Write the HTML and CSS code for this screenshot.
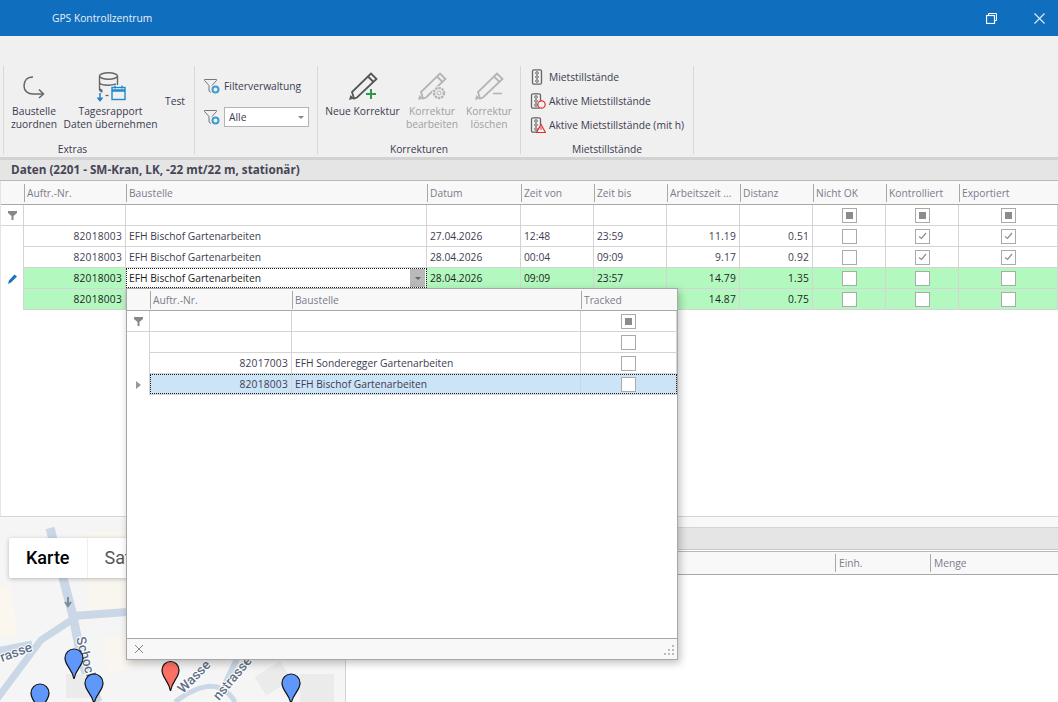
FILE: index.html
```html
<!DOCTYPE html>
<html lang="de">
<head>
  <meta charset="UTF-8">
  <title>GPS Kontrollzentrum</title>
  <link rel="stylesheet" href="styles.css">
</head>
<body>
  <header class="titlebar">
    <span class="app-title">GPS Kontrollzentrum</span>
    <div class="win-buttons">
      <svg width="11" height="11" viewBox="0 0 11 11" fill="none" stroke="#fff"><path d="M2.500 2V.5h8v7H9"/><rect x=".5" y="2.500" width="8" height="8" stroke-width="1.200"/></svg>
      <svg width="11" height="11" viewBox="0 0 11 11" fill="none" stroke="#e4eef8" stroke-width="1.100"><path d="M.5.5l10 10M10.500.5l-10 10"/></svg>
    </div>
  </header>

  <section class="ribbon">
    <div class="rib-group group-extras">
      <div class="rib-items">
        <div class="big-btn btn-zuordnen">
          <svg class="icon-zuordnen" width="24" height="24" viewBox="0 0 24 24" fill="none" stroke="#666" stroke-width="1.500"><path d="M11 2C5 2 2 6 2 11c0 5 4 8 9 8h10"/><path d="M17 14.500l4.500 4.500-4.500 4"/></svg>
          <span>Baustelle<br>zuordnen</span>
        </div>
        <div class="big-btn btn-tages">
          <svg class="icon-big" width="32" height="30" viewBox="0 0 32 30" fill="none"><g stroke="#666" stroke-width="1.400"><ellipse cx="13.500" cy="4" rx="9" ry="3.200"/><path d="M4.500 4v13c0 1.500 1 2.500 3 3M22.500 4v9M4.500 10c0 2 4 3.200 9 3.200 3 0 5-.4 7.500-1.400M4.500 16c0 1 1 2 3 2.500"/></g><path d="M5 21v7M2.500 25.500L5 28.500l2.500-3" stroke="#1c7cc4" stroke-width="1.500"/><path d="M10.500 23.500h3" stroke="#666" stroke-width="1.300"/><rect x="17" y="15.500" width="13" height="12" fill="#f0f0f0" stroke="#1c8ad0" stroke-width="1.400"/><path d="M17 18.500h13" stroke="#1c8ad0" stroke-width="2.500"/><path d="M20 13.500v3M27 13.500v3" stroke="#1c8ad0" stroke-width="1.300"/></svg>
          <span>Tagesrapport<br>Daten übernehmen</span>
        </div>
        <div class="test-btn">Test</div>
      </div>
      <div class="rib-label">Extras</div>
    </div>

    <div class="rib-group group-filter">
      <div class="filter-line">
        <svg width="16" height="16" viewBox="0 0 16 16" fill="none"><path d="M8 7.500l4.500-5v-1H.5v1L5 7.500V13l2 1.500" stroke="#777"/><circle cx="11.500" cy="11.500" r="3" fill="#f0f0f0" stroke="#3d9ad8" stroke-width="2"/></svg>
        <span>Filterverwaltung</span>
      </div>
      <div class="filter-line">
        <svg width="16" height="16" viewBox="0 0 16 16" fill="none"><path d="M8 7.500l4.500-5v-1H.5v1L5 7.500V13l2 1.500" stroke="#777"/><circle cx="11.500" cy="11.500" r="3" fill="#f0f0f0" stroke="#3d9ad8" stroke-width="2"/></svg>
        <div class="combo">Alle<i class="combo-arrow"></i></div>
      </div>
    </div>

    <div class="rib-group group-korr">
      <div class="rib-items">
        <div class="big-btn btn-neue">
          <svg class="icon-big" width="30" height="30" viewBox="0 0 30 30" fill="none"><path d="M6 26.500L4 20 23 1.500 28.500 7 9 25.500zM20 4.500l5.500 5.500" stroke="#555" stroke-width="1.800"/><path d="M1 28l1.500-5 3.500 3.500z" fill="#555"/><path d="M23 17v10M18 22h10" stroke="#2e9a46" stroke-width="2"/></svg>
          <span>Neue Korrektur</span>
        </div>
        <div class="big-btn btn-disabled btn-bearb">
          <svg class="icon-big" width="30" height="30" viewBox="0 0 30 30" fill="none"><path d="M6 26.500L4 20 23 1.500 28.500 7 9 25.500zM20 4.500l5.500 5.500" stroke="#b4b4b4" stroke-width="1.800"/><path d="M1 28l1.500-5 3.500 3.500z" fill="#b4b4b4"/><circle cx="22" cy="21" r="7" fill="#f0f0f0"/><circle cx="22" cy="21" r="5" stroke="#b4b4b4" stroke-width="2.400" stroke-dasharray="2.400 .8"/><circle cx="22" cy="21" r="2" stroke="#b4b4b4"/></svg>
          <span>Korrektur<br>bearbeiten</span>
        </div>
        <div class="big-btn btn-disabled btn-losch">
          <svg class="icon-big" width="30" height="30" viewBox="0 0 30 30" fill="none"><path d="M6 26.500L4 20 23 1.500 28.500 7 9 25.500zM20 4.500l5.500 5.500" stroke="#b4b4b4" stroke-width="1.800"/><path d="M1 28l1.500-5 3.500 3.500z" fill="#b4b4b4"/><path d="M19 21.500h9" stroke="#b4b4b4" stroke-width="1.600"/></svg>
          <span>Korrektur<br>löschen</span>
        </div>
      </div>
      <div class="rib-label">Korrekturen</div>
    </div>

    <div class="rib-group group-miet">
      <div class="rib-items miet-list">
        <div class="miet-line">
          <svg width="16" height="16" viewBox="0 0 16 16" fill="none"><rect x="2.500" y=".8" width="9" height="14.400" rx="1.500" stroke="#666" stroke-width="1.300"/><g stroke="#666"><circle cx="7" cy="4" r="1.300"/><circle cx="7" cy="8" r="1.300"/><circle cx="7" cy="12" r="1.300"/></g></svg>
          <span>Mietstillstände</span>
        </div>
        <div class="miet-line">
          <svg width="16" height="16" viewBox="0 0 16 16" fill="none"><rect x="1.500" y=".8" width="9" height="14.400" rx="1.500" stroke="#666" stroke-width="1.300"/><g stroke="#666"><circle cx="6" cy="4" r="1.300"/><circle cx="6" cy="8" r="1.300"/><circle cx="6" cy="12" r="1.300"/></g><circle cx="11.500" cy="11.500" r="3.700" fill="#f0f0f0" stroke="#e03030" stroke-width="1.200"/></svg>
          <span>Aktive Mietstillstände</span>
        </div>
        <div class="miet-line">
          <svg width="16" height="16" viewBox="0 0 16 16" fill="none"><rect x="1.500" y=".8" width="9" height="14.400" rx="1.500" stroke="#666" stroke-width="1.300"/><g stroke="#666"><circle cx="6" cy="4" r="1.300"/><circle cx="6" cy="8" r="1.300"/><circle cx="6" cy="12" r="1.300"/></g><path d="M11 7.500l4.500 8h-9z" fill="#f0f0f0" stroke="#e03030" stroke-width="1.200"/><path d="M11 10v3" stroke="#e03030"/></svg>
          <span>Aktive Mietstillstände (mit h)</span>
        </div>
      </div>
      <div class="rib-label">Mietstillstände</div>
    </div>
  </section>

  <div class="caption caption-top">Daten (2201 - SM-Kran, LK, -22 mt/22 m, stationär)</div>

  <main class="data-grid">
    <div class="row head-row">
      <div class="cell"></div>
      <div class="cell">Auftr.-Nr.</div>
      <div class="cell">Baustelle</div>
      <div class="cell">Datum</div>
      <div class="cell">Zeit von</div>
      <div class="cell">Zeit bis</div>
      <div class="cell">Arbeitszeit ...</div>
      <div class="cell">Distanz</div>
      <div class="cell">Nicht OK</div>
      <div class="cell">Kontrolliert</div>
      <div class="cell">Exportiert</div>
    </div>
    <div class="row">
      <div class="cell ind filt"><svg width="9" height="9" viewBox="0 0 9 9"><path d="M0 0h9v2L5.500 5v4h-2V5L0 2z" fill="#888"/></svg></div>
      <div class="cell"></div><div class="cell"></div><div class="cell"></div><div class="cell"></div><div class="cell"></div><div class="cell"></div><div class="cell"></div>
      <div class="cell mid"><i class="box mixed"></i></div>
      <div class="cell mid"><i class="box mixed"></i></div>
      <div class="cell mid"><i class="box mixed"></i></div>
    </div>
    <div class="row">
      <div class="cell ind"></div>
      <div class="cell num">82018003</div>
      <div class="cell">EFH Bischof Gartenarbeiten</div>
      <div class="cell">27.04.2026</div>
      <div class="cell">12:48</div>
      <div class="cell">23:59</div>
      <div class="cell num">11.19</div>
      <div class="cell num">0.51</div>
      <div class="cell mid"><i class="box"></i></div>
      <div class="cell mid"><i class="box checked"><svg width="9" height="8" viewBox="0 0 9 8" fill="none"><path d="M1 4.500l2.500 2L8 1" stroke="#8c8c8c" stroke-width="1.200"/></svg></i></div>
      <div class="cell mid"><i class="box checked"><svg width="9" height="8" viewBox="0 0 9 8" fill="none"><path d="M1 4.500l2.500 2L8 1" stroke="#8c8c8c" stroke-width="1.200"/></svg></i></div>
    </div>
    <div class="row">
      <div class="cell ind"></div>
      <div class="cell num">82018003</div>
      <div class="cell">EFH Bischof Gartenarbeiten</div>
      <div class="cell">28.04.2026</div>
      <div class="cell">00:04</div>
      <div class="cell">09:09</div>
      <div class="cell num">9.17</div>
      <div class="cell num">0.92</div>
      <div class="cell mid"><i class="box"></i></div>
      <div class="cell mid"><i class="box checked"><svg width="9" height="8" viewBox="0 0 9 8" fill="none"><path d="M1 4.500l2.500 2L8 1" stroke="#8c8c8c" stroke-width="1.200"/></svg></i></div>
      <div class="cell mid"><i class="box checked"><svg width="9" height="8" viewBox="0 0 9 8" fill="none"><path d="M1 4.500l2.500 2L8 1" stroke="#8c8c8c" stroke-width="1.200"/></svg></i></div>
    </div>
    <div class="row green">
      <div class="cell ind"><svg width="9" height="10" viewBox="0 0 9 10"><path d="M0 10l1-3.500L6.500.5 9 2.500 3 8.500z" fill="#1c6fc0"/></svg></div>
      <div class="cell num">82018003</div>
      <div class="cell editing">EFH Bischof Gartenarbeiten<i class="edit-drop"></i></div>
      <div class="cell">28.04.2026</div>
      <div class="cell">09:09</div>
      <div class="cell">23:57</div>
      <div class="cell num">14.79</div>
      <div class="cell num">1.35</div>
      <div class="cell mid"><i class="box"></i></div>
      <div class="cell mid"><i class="box"></i></div>
      <div class="cell mid"><i class="box"></i></div>
    </div>
    <div class="row green">
      <div class="cell ind"></div>
      <div class="cell num">82018003</div>
      <div class="cell"></div><div class="cell"></div><div class="cell"></div><div class="cell"></div>
      <div class="cell num">14.87</div>
      <div class="cell num">0.75</div>
      <div class="cell mid"><i class="box"></i></div>
      <div class="cell mid"><i class="box"></i></div>
      <div class="cell mid"><i class="box"></i></div>
    </div>
  </main>
  <div class="grid-footer"></div>

  <section class="bottom">
    <div class="map">
      <svg width="345" height="183" viewBox="0 0 345 183">
        <rect width="345" height="183" fill="#f5f5f5"/>
        <path d="M0 68h10l8 50H0z" fill="#fbf7ee"/>
        <path d="M84 12h43v80l-40 4z" fill="#f9f6f0"/>
        <path d="M100 120l70-15 8 30-70 20z" fill="#f9f6f0"/>
        <g fill="none" stroke="#c9d7e6">
          <path d="M50 9L73 97l9 46 16 40" stroke-width="9"/>
          <path d="M73 97l54-4" stroke-width="8"/>
          <path d="M73 100l-32 21L-3 180" stroke-width="7"/>
          <path d="M32 125L-3 132" stroke-width="7"/>
          <path d="M175 183c10-8 30-20 45-14 8 4 12 8 15 14" stroke-width="5"/>
          <path d="M225 165l12-25" stroke-width="6"/>
        </g>
        <path d="M68 78v8m-3-3l3 4 3-4" stroke="#7d8a99" stroke-width="2" fill="none"/>
        <rect x="258" y="150" width="30" height="22" fill="#ebebeb" transform="rotate(-32 270 160)"/>
        <rect x="300" y="155" width="34" height="28" fill="#ebebeb"/>
        <rect x="66" y="155" width="24" height="24" fill="#ebebeb"/>
        <g class="street">
          <text transform="translate(2 143) rotate(-20)">rasse</text>
          <text transform="translate(76 119) rotate(75)">Schocher</text>
          <text transform="translate(183 175) rotate(-45)">Wasse</text>
          <text transform="translate(219 182) rotate(-50)">nstrasse</text>
        </g>
        <g stroke="#111" stroke-width="1.200">
          <path d="M74 160c-2-11-9-13-9-21a9 9 0 0 1 18 0c0 8-7 10-9 21z" fill="#5f97fb"/>
          <path d="M94 185c-2-11-9-13-9-21a9 9 0 0 1 18 0c0 8-7 10-9 21z" fill="#5f97fb"/>
          <path d="M40 195c-2-11-9-13-9-21a9 9 0 0 1 18 0c0 8-7 10-9 21z" fill="#5f97fb"/>
          <path d="M170.500 172c-2-11-8.500-13-8.500-21a8.500 8.500 0 0 1 17 0c0 8-6.500 10-8.500 21z" fill="#fb7065"/>
          <path d="M291 185c-2-11-9-13-9-21a9 9 0 0 1 18 0c0 8-7 10-9 21z" fill="#5f97fb"/>
        </g>
      </svg>
      <div class="map-tabs">
        <div class="map-tab active">Karte</div>
        <div class="map-tab">Satellit</div>
      </div>
    </div>
    <div class="detail">
      <div class="caption caption-detail"></div>
      <div class="detail-head">
        <div class="detail-spacer"></div>
        <div class="detail-col col-einh">Einh.</div>
        <div class="detail-col">Menge</div>
      </div>
    </div>
  </section>

  <div class="popup">
    <div class="row pop-row head-row">
      <div class="cell"></div>
      <div class="cell">Auftr.-Nr.</div>
      <div class="cell">Baustelle</div>
      <div class="cell">Tracked</div>
    </div>
    <div class="row pop-row">
      <div class="cell ind filt"><svg width="9" height="9" viewBox="0 0 9 9"><path d="M0 0h9v2L5.500 5v4h-2V5L0 2z" fill="#888"/></svg></div>
      <div class="cell"></div><div class="cell"></div>
      <div class="cell mid"><i class="box mixed"></i></div>
    </div>
    <div class="row pop-row">
      <div class="cell ind"></div><div class="cell"></div><div class="cell"></div>
      <div class="cell mid"><i class="box"></i></div>
    </div>
    <div class="row pop-row">
      <div class="cell ind"></div>
      <div class="cell num">82017003</div>
      <div class="cell">EFH Sonderegger Gartenarbeiten</div>
      <div class="cell mid"><i class="box"></i></div>
    </div>
    <div class="row pop-row selected">
      <div class="cell ind"><svg width="5" height="8" viewBox="0 0 5 8"><path d="M0 0l5 4-5 4z" fill="#999"/></svg></div>
      <div class="cell num">82018003</div>
      <div class="cell">EFH Bischof Gartenarbeiten</div>
      <div class="cell mid"><i class="box"></i></div>
    </div>
    <div class="pop-body"></div>
    <div class="pop-foot">
      <svg width="10" height="10" viewBox="0 0 10 10" fill="none" stroke="#888"><path d="M1 1l8 8M9 1l-8 8"/></svg>
      <svg width="11" height="11" viewBox="0 0 11 11" fill="#bbb"><path d="M9 1h2v2H9zM5 5h2v2H5zM9 5h2v2H9zM1 9h2v2H1zM5 9h2v2H5zM9 9h2v2H9z"/></svg>
    </div>
  </div>
</body>
</html>
```

FILE: styles.css
```css
/* Global */
body {
  margin: 0;
  width: 1058px;
  height: 702px;
  overflow: hidden;
  position: relative;
  display: flex;
  flex-direction: column;
  background: #fff;
  font-family: 'Open Sans', 'Liberation Sans', sans-serif;
  font-size: 10.25px;
  color: #3c3c50;
}

/* Title bar */
.titlebar {
  height: 36px;
  flex: none;
  background: #106ebe;
  display: flex;
  align-items: center;
  justify-content: space-between;
  color: #e8f1f9;
}

.app-title {
  margin-left: 52px;
}

.win-buttons {
  display: flex;
  gap: 37px;
  margin-right: 13px;
}

.win-buttons svg { display: block; }

/* Ribbon */
.ribbon {
  height: 124px;
  flex: none;
  box-sizing: border-box;
  background: #f0f0f0;
  border-bottom: 3px solid #d2d2d2;
  display: flex;
  padding: 30px 0 0 3px;
}

.rib-group {
  height: 88px;
  display: flex;
  flex-direction: column;
  border-left: 1px solid #d8d8d8;
}

.rib-items {
  display: flex;
  flex: none;
  height: 77px;
}

.rib-label {
  text-align: center;
  line-height: 13px;
  flex: none;
}

.group-extras { width: 190px; }
.group-extras .rib-label { padding-right: 53px; }
.group-filter { width: 122px; padding-top: 10px; height: 78px; }
.group-korr { width: 202px; }
.group-miet { width: 172px; border-right: 1px solid #d8d8d8; }

.big-btn {
  display: flex;
  flex-direction: column;
  align-items: center;
  text-align: center;
  line-height: 13px;
  white-space: nowrap;
}

.icon-big {
  flex: none;
  margin: 6px 0 3px;
}

.icon-zuordnen {
  flex: none;
  margin: 9px 0 6px;
}

.btn-zuordnen { width: 60px; }
.btn-tages { width: 93px; }
.btn-neue { width: 83px; margin-left: 3px; }
.btn-bearb { width: 56px; }
.btn-losch { width: 52px; margin-left: 3px; }
.btn-disabled { color: #a0a0a0; }

.test-btn {
  margin-left: 8px;
  padding-top: 28px;
}

.filter-line {
  display: flex;
  align-items: center;
  gap: 4px;
  height: 20px;
  margin: 0 0 11px 9px;
}

.combo {
  width: 85px;
  height: 20px;
  box-sizing: border-box;
  border: 1px solid #b4b4b4;
  background: #fff;
  padding-left: 4px;
  line-height: 18px;
  position: relative;
}

.combo-arrow {
  position: absolute;
  right: 4px;
  top: 8px;
  border: 3px solid transparent;
  border-top: 3px solid #888;
  border-bottom: 0;
}

.miet-list {
  flex-direction: column;
  margin-top: -1px;
  height: 78px;
  padding-left: 9px;
}

.miet-line {
  display: flex;
  align-items: center;
  gap: 3px;
  height: 24px;
  white-space: nowrap;
}

/* Captions */
.caption {
  background: #e5e5e5;
  font-weight: 700;
  flex: none;
}

.caption-top {
  height: 21px;
  line-height: 19px;
  padding-left: 11px;
  border-bottom: 1px solid #b8b8b8;
  box-sizing: border-box;
  color: #454555;
  font-size: 11.7px;
}

/* Grid */
.data-grid {
  height: 336px;
  flex: none;
  border-bottom: 1px solid #d4d4d4;
  border-left: 1px solid #e4e4e4;
  box-sizing: border-box;
}

.row {
  display: grid;
  grid-template-columns: 23px 102px 301px 94px 73px 73px 73px 73px 73px 73px 1fr;
  height: 21px;
  box-sizing: border-box;
  border-bottom: 1px solid #d4d4d4;
}

.cell {
  border-right: 1px solid #d4d4d4;
  padding: 0 3px;
  line-height: 20px;
  white-space: nowrap;
  overflow: hidden;
  min-width: 0;
}

.num {
  text-align: right;
  padding-right: 3px;
  letter-spacing: .2px;
}

.mid {
  display: flex;
  align-items: center;
  justify-content: center;
  padding: 0;
}

/* the indicator column has no row lines, only the filter row does */
.ind {
  display: flex;
  align-items: center;
  justify-content: center;
  padding: 0;
  background: #fff;
  margin-bottom: -1px;
  position: relative;
}

.ind.filt { margin-bottom: 0; }

.head-row {
  height: 24px;
  background: #f8f8f8;
  border-bottom: 1px solid #a8a8a8;
  color: #7c7c8c;
  padding: 3px 0 0;
}

.head-row .cell {
  line-height: 19px;
  height: 18px;
  border-right: 0;
  border-left: 1px solid #a8a8a8;
  padding-left: 2px;
}

.head-row .cell:first-child { border-left: 0; }

.green .cell { background: #b3f9bf; color: #1c1c1c; }
.green .cell.ind { background: #fff; }

.green .cell.editing {
  background: #fff;
  position: relative;
  outline: 1px dotted #222;
  outline-offset: -1px;
}

.edit-drop {
  position: absolute;
  right: 1px;
  top: 1px;
  bottom: 1px;
  width: 15px;
  background: #b9b9b9;
}

.edit-drop::after {
  content: "";
  position: absolute;
  left: 5px;
  top: 8px;
  border: 3px solid transparent;
  border-top: 3px solid #666;
  border-bottom: 0;
}

.box {
  width: 13px;
  height: 13px;
  border: 1px solid #aaa;
  background: #fff;
  display: flex;
  align-items: center;
  justify-content: center;
}

.box.mixed::after {
  content: "";
  width: 7px;
  height: 7px;
  background: #8c8c8c;
}

.grid-footer {
  height: 11px;
  flex: none;
  background: #f8f8f8;
  border-bottom: 1px solid #d4d4d4;
  box-sizing: border-box;
}

/* Bottom part */
.bottom {
  flex: 1;
  display: flex;
  min-height: 0;
}

.map {
  width: 345px;
  flex: none;
  border-right: 1px solid #d4d4d4;
  position: relative;
  overflow: hidden;
  margin-top: -9px;
}

.map svg { display: block; }

.street text {
  font-family: Roboto, sans-serif;
  font-size: 13.5px;
  font-weight: 500;
  fill: #5f6f85;
  stroke: #fff;
  stroke-width: 2px;
  paint-order: stroke;
}

.map-tabs {
  position: absolute;
  left: 9px;
  top: 19px;
  display: flex;
  height: 40px;
  background: #fff;
  border-radius: 2px;
  box-shadow: 0 1px 4px rgba(0, 0, 0, 0.25);
  font-family: Roboto, sans-serif;
  font-size: 18px;
  line-height: 40px;
}

.map-tab {
  padding: 0 17px;
  color: #565656;
}

.map-tab.active {
  color: #000;
  font-weight: 500;
  border-right: 1px solid #eee;
}

.detail {
  flex: 1;
  min-width: 0;
}

.caption-detail {
  height: 22px;
  border-bottom: 1px solid #c8c8c8;
  box-sizing: border-box;
}

.detail-head {
  display: flex;
  height: 24px;
  box-sizing: border-box;
  margin-top: 1px;
  padding-top: 2px;
  background: #f8f8f8;
  border-top: 1px solid #b8b8b8;
  border-bottom: 1px solid #a8a8a8;
  color: #7c7c8c;
}

.detail-spacer { width: 489px; }

.detail-col {
  border-left: 1px solid #a8a8a8;
  padding-left: 3px;
  height: 18px;
  line-height: 18px;
}

.col-einh { width: 91px; }

/* Dropdown popup */
.popup {
  position: absolute;
  left: 126px;
  top: 288px;
  width: 552px;
  height: 372px;
  box-sizing: border-box;
  background: #fff;
  border: 1px solid #a8a8a8;
  box-shadow: 2px 3px 8px rgba(0, 0, 0, 0.25);
  display: flex;
  flex-direction: column;
}

.pop-row {
  grid-template-columns: 23px 142px 289px 1fr;
  flex: none;
}

.pop-row.head-row {
  height: 22px;
  padding-top: 2px;
}

.pop-row.selected .cell { background: #cce4f7; }
.pop-row.selected .cell.ind { background: #fff; }

.pop-row.selected {
  position: relative;
}

.pop-row.selected::after {
  content: "";
  position: absolute;
  left: 23px;
  right: 0;
  top: 0;
  bottom: 0;
  outline: 1px dotted #222;
  outline-offset: -1px;
}

.pop-body { flex: 1; }

.pop-foot {
  height: 20px;
  flex: none;
  background: #f8f8f8;
  border-top: 1px solid #a8a8a8;
  display: flex;
  align-items: center;
  justify-content: space-between;
  padding: 0 3px 0 7px;
}
```
